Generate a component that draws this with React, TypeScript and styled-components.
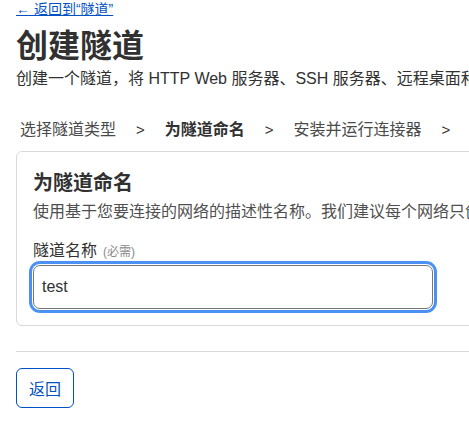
import React from "react";
import styled, { createGlobalStyle } from "styled-components";

const GlobalStyle = createGlobalStyle`
  html, body {
    margin: 0;
    padding: 0;
    background: #ffffff;
    overflow: hidden;
  }
  body {
    font-family: "Liberation Sans", "Noto Sans CJK SC", sans-serif;
    color: #313131;
  }
`;

const Page = styled.div`
  width: 760px;
  padding: 0 16px;
`;

const BackLink = styled.a`
  display: inline-block;
  font-size: 14px;
  line-height: 16px;
  color: #0051c3;
  text-decoration: underline;
`;

const Title = styled.h1`
  margin: 8px 0 0;
  font-size: 32px;
  line-height: 40px;
  font-weight: 700;
  color: #313131;
`;

const Lead = styled.p`
  margin: 1px 0 0;
  font-size: 16px;
  line-height: 24px;
  white-space: nowrap;
  color: #313131;
`;

const Steps = styled.ol`
  display: flex;
  align-items: center;
  list-style: none;
  margin: 27px 0 0;
  padding: 0 4px;
  gap: 20px;
  font-size: 16px;
  line-height: 24px;
`;

const Step = styled.li<{ $active?: boolean }>`
  color: ${(p) => (p.$active ? "#313131" : "#4a4a4a")};
  font-weight: ${(p) => (p.$active ? 700 : 400)};
`;

const Chevron = styled.li`
  color: #313131;
  font-size: 15px;
`;

const Card = styled.section`
  margin-top: 9px;
  border: 1px solid #d9d9d9;
  border-radius: 6px;
  padding: 17px 16px 16px;
`;

const CardTitle = styled.h2`
  margin: 0;
  font-size: 20px;
  line-height: 28px;
  font-weight: 700;
`;

const CardText = styled.p`
  margin: 4px 0 0;
  font-size: 16px;
  line-height: 22px;
  color: #4f4f4f;
  white-space: nowrap;
`;

const Label = styled.label`
  display: block;
  margin-top: 17px;
  font-size: 16px;
  line-height: 22px;
  color: #313131;
`;

const Hint = styled.span`
  margin-left: 6px;
  font-size: 12px;
  color: #8a8a8a;
`;

const Input = styled.input`
  display: block;
  box-sizing: border-box;
  margin-top: 2px;
  width: 400px;
  height: 44px;
  padding: 0 8px;
  border: 1px solid #767676;
  border-radius: 7px;
  font-family: "Liberation Sans", "Noto Sans CJK SC", sans-serif;
  font-size: 16px;
  color: #313131;
  outline: none;
  box-shadow: 0 0 0 1px #ffffff, 0 0 0 4px #4a90f5;
`;

const Divider = styled.hr`
  margin: 25px 0 0;
  border: 0;
  border-top: 1px solid #d9d9d9;
`;

const BackButton = styled.button`
  margin-top: 16px;
  width: 58px;
  height: 40px;
  border: 1px solid #0051c3;
  border-radius: 6px;
  background: #ffffff;
  color: #0051c3;
  font-family: "Liberation Sans", "Noto Sans CJK SC", sans-serif;
  font-size: 16px;
`;

export default function App() {
  return (
    <>
      <GlobalStyle />
      <Page>
        <BackLink href="#">← 返回到“隧道”</BackLink>
        <Title>创建隧道</Title>
        <Lead>
          创建一个隧道，将 HTTP Web 服务器、SSH 服务器、远程桌面和其他协议安全地连接到 Cloudflare。
        </Lead>
        <Steps>
          <Step>选择隧道类型</Step>
          <Chevron>&gt;</Chevron>
          <Step $active>为隧道命名</Step>
          <Chevron>&gt;</Chevron>
          <Step>安装并运行连接器</Step>
          <Chevron>&gt;</Chevron>
          <Step>路由流量</Step>
        </Steps>
        <Card>
          <CardTitle>为隧道命名</CardTitle>
          <CardText>
            使用基于您要连接的网络的描述性名称。我们建议每个网络只创建一个隧道。
          </CardText>
          <Label htmlFor="tunnel-name">
            隧道名称<Hint>(必需)</Hint>
          </Label>
          <Input id="tunnel-name" defaultValue="test" />
        </Card>
        <Divider />
        <BackButton>返回</BackButton>
      </Page>
    </>
  );
}
